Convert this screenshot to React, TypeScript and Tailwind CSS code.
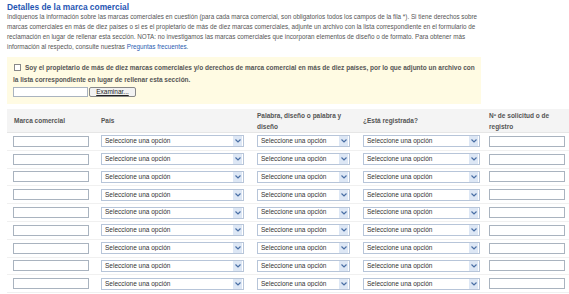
import React from 'react';

const rows = Array.from({ length: 10 }, (_, i) => i);

function FakeSelect({ width }: { width: string }) {
  return (
    <div className={`${width} h-[12px] flex items-center border border-[#b7c5d9] bg-white`}>
      <span className="flex-1 pl-[3px] text-[6.5px] leading-none text-[#333] truncate">Seleccione una opción</span>
      <span className="w-[9px] h-[10px] mr-px flex items-center justify-center bg-[#dde7f5]">
        <svg width="6" height="4" viewBox="0 0 6 4">
          <path d="M0.5 0.5 L3 3 L5.5 0.5" stroke="#4a6fa5" strokeWidth="1.2" fill="none" />
        </svg>
      </span>
    </div>
  );
}

function TextBox({ width }: { width: string }) {
  return <div className={`${width} h-[11px] border border-[#a9b3bf] bg-white`} />;
}

export default function App() {
  return (
    <div className="w-[569px] h-[294px] overflow-hidden bg-white font-['Liberation_Sans',Arial,sans-serif]">
      <div className="pl-[7px] pt-[2px]">
        <h2 className="text-[8.4px] leading-[10px] font-bold text-[#1f56b3]">Detalles de la marca comercial</h2>
        <p className="mt-0 w-[480px] text-[6.3px] leading-[10px] text-[#555]">
          Indiquenos la información sobre las marcas comerciales en cuestión (para cada marca comercial, son obligatorios todos los campos de la fila *). Si tiene derechos sobre marcas comerciales en más de diez países o si es el propietario de más de diez marcas comerciales, adjunte un archivo con la lista correspondiente en el formulario de reclamación en lugar de rellenar esta sección. NOTA: no investigamos las marcas comerciales que incorporan elementos de diseño o de formato. Para obtener más información al respecto, consulte nuestras <span className="text-[#2a5db0]">Preguntas frecuentes</span>.
        </p>

        {/* Archivo adjunto */}
        <div className="mt-[5px] w-[474px] h-[47px] bg-[#fffbe3] pl-[6px] pt-[5px]">
          <p className="text-[6.5px] leading-[12px] font-bold text-[#555]">
            <span className="inline-block align-[-1px] w-[7px] h-[7px] border border-[#888] bg-white mr-[4px] ml-px" />
            Soy el propietario de más de diez marcas comerciales y/o derechos de marca comercial en más de diez países, por lo que adjunto un archivo con la lista correspondiente en lugar de rellenar esta sección.
          </p>
          <div className="mt-px flex items-center gap-px">
            <div className="w-[75px] h-[10px] border border-[#a9b3bf] bg-white" />
            <div className="w-[47px] h-[10px] border border-[#888] rounded-[2px] bg-[#f2f2f2] flex items-center justify-center text-[6.5px] leading-none text-[#222] underline decoration-[0.5px]">
              Examinar...
            </div>
          </div>
        </div>

        {/* Tabla */}
        <div className="mt-[5px]">
          <div className="flex h-[24px] bg-[#f4f4f4] border-b border-[#e6e6e6] text-[6.5px] leading-[11px] font-bold text-[#555]">
            <div className="w-[88px] pl-[7px] flex items-center">Marca comercial</div>
            <div className="w-[156px] pl-[6px] flex items-center">País</div>
            <div className="w-[106px] pl-[6px] pr-[8px] flex items-center">Palabra, diseño o palabra y diseño</div>
            <div className="w-[126px] pl-[6px] flex items-center">¿Está registrada?</div>
            <div className="w-[86px] pl-[6px] pr-[8px] flex items-center">Nº de solicitud o de registro</div>
          </div>
          {rows.map((r) => (
            <div key={r} className="flex h-[17.8px] items-center border-b border-[#f0f0f0]">
              <div className="w-[88px] pl-[6px]"><TextBox width="w-[76px]" /></div>
              <div className="w-[156px] pl-[6px]"><FakeSelect width="w-[143px]" /></div>
              <div className="w-[106px] pl-[6px]"><FakeSelect width="w-[93px]" /></div>
              <div className="w-[126px] pl-[6px]"><FakeSelect width="w-[117px]" /></div>
              <div className="w-[86px] pl-[6px]"><TextBox width="w-[76px]" /></div>
            </div>
          ))}
        </div>
      </div>
    </div>
  );
}
